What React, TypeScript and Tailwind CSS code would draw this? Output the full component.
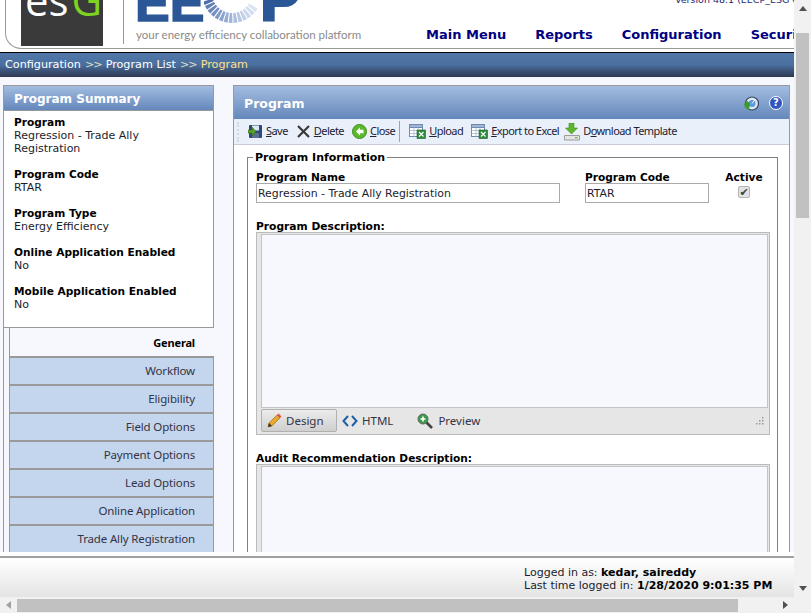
import type { ReactNode } from "react";

const summary = [
  { label: "Program", value: ["Regression - Trade Ally", "Registration"] },
  { label: "Program Code", value: ["RTAR"] },
  { label: "Program Type", value: ["Energy Efficiency"] },
  { label: "Online Application Enabled", value: ["No"] },
  { label: "Mobile Application Enabled", value: ["No"] },
];

const tabs = [
  "Workflow",
  "Eligibility",
  "Field Options",
  "Payment Options",
  "Lead Options",
  "Online Application",
  "Trade Ally Registration",
];

const shades = ["#4f6fab", "#5f7db5", "#6a86bb", "#7590c2", "#809ac8", "#8ba3cd", "#96acd3", "#a1b5d9", "#acbede", "#b7c7e3", "#c1cfe8", "#cbd7ec", "#d3ddef", "#dbe3f2"];

function Sunburst() {
  const cx = 28;
  const cy = -7;
  const pt = (r: number, deg: number) => {
    const a = (deg * Math.PI) / 180;
    return `${cx + r * Math.cos(a)},${cy + r * Math.sin(a)}`;
  };
  return (
    <svg width="54" height="25" viewBox="0 0 54 25" className="shrink-0">
      {shades.map((shade, i) => {
        const d = 160 - i * 9.6;
        return (
          <polygon
            key={shade}
            points={`${pt(20, d - 3.2)} ${pt(30, d - 3.8)} ${pt(30, d + 3.8)} ${pt(20, d + 3.2)}`}
            fill={shade}
          />
        );
      })}
    </svg>
  );
}

function SaveIcon() {
  return (
    <svg width="15" height="15" viewBox="0 0 15 15">
      <rect x="1" y="1" width="13" height="13" rx="1" fill="#2d4a7c" />
      <rect x="4" y="1.5" width="7" height="5" fill="#dfe7f2" />
      <rect x="4" y="9" width="7" height="5" fill="#5a6f92" />
      <path d="M0 6h4V3l4 4.500L4 12V9H0z" fill="#5aa02c" stroke="#2f6b16" strokeWidth=".6" />
    </svg>
  );
}

function DeleteIcon() {
  return (
    <svg width="15" height="15" viewBox="0 0 15 15">
      <path d="M2 2l11 11M13 2L2 13" stroke="#3a3a3a" strokeWidth="2.2" />
    </svg>
  );
}

function CloseIcon() {
  return (
    <svg width="15" height="15" viewBox="0 0 15 15">
      <circle cx="7.500" cy="7.500" r="7" fill="#5cb82e" stroke="#3f8f1e" />
      <path d="M8 3.500L4 7.500l4 4V9.200h3.500V5.800H8z" fill="#fff" />
    </svg>
  );
}

function ExcelIcon() {
  return (
    <svg width="17" height="15" viewBox="0 0 17 15">
      <rect x=".5" y=".5" width="13" height="12" fill="#fff" stroke="#6f88ad" />
      <rect x=".5" y=".5" width="13" height="3" fill="#9fb6d6" stroke="#6f88ad" />
      <path d="M.5 6.500h13M.5 9.500h13M5 3.500v9M9 3.500v9" stroke="#a9b9cf" strokeWidth=".8" />
      <rect x="8" y="6" width="8.500" height="8.500" fill="#2f8a3a" stroke="#1d6128" strokeWidth=".6" />
      <path d="M10 8l4.500 4.500M14.500 8L10 12.500" stroke="#fff" strokeWidth="1.200" />
    </svg>
  );
}

function DownloadIcon() {
  return (
    <svg width="16" height="18" viewBox="0 0 16 18">
      <path d="M5 0h5v5h3.500L7.500 11 1.500 5H5z" fill="#5fb52d" stroke="#3f8f1e" strokeWidth=".6" />
      <path d="M.5 12.500h15v4.500H.5z" fill="#e4e4e4" stroke="#9c9c9c" />
      <rect x="11" y="14" width="2.500" height="1.200" fill="#5fb52d" />
    </svg>
  );
}

function GlobeIcon() {
  return (
    <svg width="15" height="15" viewBox="0 0 15 15">
      <circle cx="8" cy="7.500" r="6.500" fill="#dfe9f5" stroke="#33475f" strokeWidth="1.200" />
      <circle cx="8" cy="7.500" r="3.500" fill="#5b9bd8" />
      <path d="M0 8l3-3 3 2-1 7C2 13 .5 11 0 8z" fill="#3d9a2c" />
      <path d="M8 7.500l3-4" stroke="#fff" strokeWidth="1" />
    </svg>
  );
}

function HelpIcon() {
  return (
    <div className="flex h-[14px] w-[14px] items-center justify-center rounded-full border-[1.5px] border-white bg-[#2f55c0] text-[10px] font-bold leading-none text-white">
      ?
    </div>
  );
}

function PencilIcon() {
  return (
    <svg width="15" height="15" viewBox="0 0 15 15">
      <path d="M1 14l1-4 8-8 3 3-8 8z" fill="#e9a82c" stroke="#8f6414" strokeWidth=".6" />
      <path d="M10 2l1.500-1.500 3 3L13 5z" fill="#d9534f" />
      <path d="M1 14l1-4 3 3z" fill="#3b3024" />
    </svg>
  );
}

function CodeIcon() {
  return (
    <svg width="16" height="12" viewBox="0 0 16 12">
      <path d="M6 1L1.500 6 6 11M10 1l4.500 5L10 11" fill="none" stroke="#1f5fa8" strokeWidth="2" />
    </svg>
  );
}

function ZoomIcon() {
  return (
    <svg width="16" height="16" viewBox="0 0 16 16">
      <path d="M9 9l6 6" stroke="#444" strokeWidth="2.600" />
      <circle cx="6" cy="6" r="5" fill="#3e9a4a" stroke="#5c6b5c" />
      <path d="M3.500 6h5M6 3.500v5" stroke="#fff" strokeWidth="1.600" />
    </svg>
  );
}

function ToolButton({ icon, first, rest, before = "" }: { icon: ReactNode; first: string; rest: string; before?: string }) {
  return (
    <div className="flex items-center gap-[3px]">
      {icon}
      <span className="-mt-[2px]">
        {before}
        <span className="underline">{first}</span>
        {rest}
      </span>
    </div>
  );
}

function Editor({ children, bodyHeight }: { children?: ReactNode; bodyHeight: string }) {
  return (
    <div className="w-[514px] border border-[#bbbbbb] bg-[#e6e6e6] pl-[4px] pr-[1px] pt-[1px]">
      <div className={`${bodyHeight} border border-[#c4c4c4] bg-[#f7f8fe]`} />
      {children}
    </div>
  );
}

export default function App() {
  return (
    <div className="flex h-[613px] w-[811px] flex-col overflow-hidden bg-white font-['DejaVu_Sans',sans-serif] text-[11px] leading-[13px] text-[#1c1c2c]">
      <div className="flex min-h-0 flex-1">
        <div className="flex w-[794px] flex-col">
          {/* header */}
          <div className="h-[52px] shrink-0 pl-[5px]">
            <div className="flex h-[49px] overflow-hidden rounded-bl-[16px] border-b border-l border-[#999999]">
              <div className="ml-[15px] h-[46px] w-[82px] shrink-0 overflow-hidden bg-[#3a3a3a] pl-[4px] font-['Open_Sans',sans-serif] text-[42px] leading-[2px]">
                <div className="-mt-[1px] whitespace-nowrap">
                  <span className="text-white">es</span>
                  <span className="ml-[3px] text-[#7ed321]">G</span>
                </div>
              </div>
              <div className="ml-[20px] h-[44px] w-px shrink-0 bg-[#999999]" />
              <div className="ml-[11px] w-[240px] shrink-0">
                <div className="flex h-[27px] items-start overflow-hidden font-['Liberation_Sans',sans-serif] font-bold leading-none text-[#2b5797] [-webkit-text-stroke:1.5px_#2b5797]">
                  <span className="-mt-[23px] text-[52px]">EE</span>
                  <Sunburst />
                  <span className="-mt-[30px] ml-[2px] text-[60px] [-webkit-text-stroke:3px_#2b5797]">P</span>
                </div>
                <p className="ml-[1px] mt-[1px] whitespace-nowrap font-['Lato',sans-serif] text-[11.5px] leading-[14px] text-[#8a8a8a]">your energy efficiency collaboration platform</p>
              </div>
              <div className="min-w-0 flex-1 overflow-hidden">
                <p className="-mt-[7px] whitespace-nowrap pl-[300px] text-[9.5px] leading-[13px] text-[#1e2a78]">Version 48.1 (EECP_ESG QA)</p>
                <nav className="mt-[21px] flex gap-[29px] whitespace-nowrap pl-[51px] text-[13px] font-bold leading-[16px] text-[#000080]">
                  <span>Main Menu</span>
                  <span>Reports</span>
                  <span>Configuration</span>
                  <span>Security</span>
                </nav>
              </div>
            </div>
          </div>

          {/* breadcrumb */}
          <div className="flex h-[25px] shrink-0 items-center gap-[4px] border-t border-black bg-gradient-to-b from-[#5178aa] via-[#4a6f9f] to-[#2c3750] pb-[2px] pl-[5px] text-[11.2px] text-white">
            <span>Configuration</span>
            <span className="tracking-[-1px] text-[#d9dfc8]">&gt;&gt;</span>
            <span>Program List</span>
            <span className="tracking-[-1px] text-[#d9dfc8]">&gt;&gt;</span>
            <span className="text-[#ffe08a]">Program</span>
          </div>

          {/* content */}
          <div className="flex h-[475px] shrink-0 gap-[19px] overflow-hidden bg-[#f7f8fe] pl-[3px] pt-[8px]">
            <aside className="w-[211px] shrink-0 border-l border-[#999999]">
              <div className="flex h-[25px] items-center border-r border-t border-[#999999] bg-gradient-to-b from-[#a3bde0] to-[#6587bb] pl-[10px] pt-[3px] text-[12px] font-bold text-white">
                Program Summary
              </div>
              <div className="flex h-[218px] flex-col gap-[13px] border-b border-r border-t border-[#999999] bg-white pl-[10px] pt-[5px]">
                {summary.map((s) => (
                  <div key={s.label}>
                    <p className="text-[10.6px] font-bold text-black">{s.label}</p>
                    {s.value.map((v) => (
                      <p key={v}>{v}</p>
                    ))}
                  </div>
                ))}
              </div>
              <div className="ml-[5px] font-['Noto_Sans',sans-serif] text-[11.5px] tracking-[-0.15px]">
                <div className="flex h-[28px] items-center justify-end border-l border-[#999999] bg-[#f7f8fe] pr-[19px] text-[11px] font-bold text-black">
                  General
                </div>
                {tabs.map((t) => (
                  <div key={t} className="flex h-[28px] items-center justify-end border-x border-t-2 border-[#999999] bg-[#c4d6ee] pb-[2px] pr-[18px] text-[#333344]">
                    {t}
                  </div>
                ))}
              </div>
            </aside>

            <main className="w-[557px] shrink-0 border-x border-t border-[#999999] bg-white">
              <div className="flex h-[33px] items-center justify-between bg-gradient-to-b from-[#a3bde0] to-[#6587bb] pl-[10px] pr-[6px] pt-[1px] text-[12.5px] font-bold text-white">
                Program
                <div className="flex items-center gap-[10px]">
                  <GlobeIcon />
                  <HelpIcon />
                </div>
              </div>
              <div className="flex h-[26px] items-center border-b border-[#c8ccd4] bg-[#eaf0fa] pl-[3px] font-['Noto_Sans',sans-serif] tracking-[-0.55px] text-[#222233]">
                <div className="mr-[9px] h-[20px] border-l-2 border-dotted border-[#cfd6e2]" />
                <div className="flex items-center gap-[8px]">
                  <ToolButton icon={<SaveIcon />} first="S" rest="ave" />
                  <ToolButton icon={<DeleteIcon />} first="D" rest="elete" />
                  <ToolButton icon={<CloseIcon />} first="C" rest="lose" />
                </div>
                <div className="ml-[4px] mr-[9px] h-[21px] w-px bg-[#9aa3b0]" />
                <div className="flex items-center gap-[8px]">
                  <ToolButton icon={<ExcelIcon />} first="U" rest="pload" />
                  <ToolButton icon={<ExcelIcon />} first="E" rest="xport to Excel" />
                </div>
                <div className="ml-[5px]">
                  <ToolButton icon={<DownloadIcon />} before="D" first="o" rest="wnload Template" />
                </div>
              </div>

              <fieldset className="ml-[13px] mt-[6px] h-[500px] w-[531px] border border-[#808080] pl-[8px]">
                <legend className="-ml-[3px] px-[2px] font-bold text-black">Program Information</legend>
                <div className="mt-[7px] flex">
                  <label className="block w-[304px]">
                    <span className="block text-[10.6px] font-bold text-black">Program Name</span>
                    <input readOnly value="Regression - Trade Ally Registration" className="mt-[-1px] h-[20px] w-full border border-[#aaaaaa] bg-white px-[1px] text-[10.9px] text-[#1c1c2c] outline-none" />
                  </label>
                  <label className="ml-[25px] block w-[124px]">
                    <span className="block text-[10.6px] font-bold text-black">Program Code</span>
                    <input readOnly value="RTAR" className="mt-[-1px] h-[20px] w-full border border-[#aaaaaa] bg-white px-[1px] text-[10.9px] text-[#1c1c2c] outline-none" />
                  </label>
                  <div className="ml-[16px] flex w-[38px] flex-col items-center">
                    <span className="text-[10.6px] font-bold text-black">Active</span>
                    <div className="mt-[2px] flex h-[12px] w-[12px] items-center justify-center rounded-[2px] border border-[#b5b5b5] bg-[#e2e2e2] text-[11px] leading-none text-[#444444]">
                      ✔
                    </div>
                  </div>
                </div>

                <p className="mt-[17px] text-[10.7px] font-bold text-black">Program Description:</p>
                <div className="mt-[-1px]">
                  <Editor bodyHeight="h-[174px]">
                    <div className="flex h-[26px] items-center pb-[1px] font-['Noto_Sans',sans-serif] text-[11.5px] text-[#333344]">
                      <div className="flex h-[23px] w-[76px] items-center gap-[4px] rounded-[2px] border border-[#b0b0b0] bg-gradient-to-b from-[#ececec] to-[#cfcfcf] pl-[5px]">
                        <PencilIcon />
                        Design
                      </div>
                      <div className="ml-[5px] flex items-center gap-[4px]">
                        <CodeIcon />
                        HTML
                      </div>
                      <div className="ml-[24px] flex items-center gap-[5px]">
                        <ZoomIcon />
                        Preview
                      </div>
                      <svg width="12" height="12" viewBox="0 0 12 12" className="ml-auto mr-[3px]">
                        <path d="M9 2h1.500v1.500H9zM6 5h1.500v1.500H6zM9 5h1.500v1.500H9zM3 8h1.500v1.500H3zM6 8h1.500v1.500H6zM9 8h1.500v1.500H9z" fill="#9a9a9a" />
                      </svg>
                    </div>
                  </Editor>
                </div>

                <p className="mt-[17px] text-[10.6px] font-bold text-black">Audit Recommendation Description:</p>
                <div className="mt-[-1px]">
                  <Editor bodyHeight="h-[174px]" />
                </div>
              </fieldset>
            </main>
          </div>

          {/* footer */}
          <div className="mt-[4px] flex h-[41px] shrink-0 justify-end border-t-2 border-[#a0a0a0] bg-gradient-to-b from-white to-[#e4e4e4] pr-[20px] pt-[8px]">
            <div className="w-[250px]">
              <p>
                Logged in as: <b className="text-black">kedar, saireddy</b>
              </p>
              <p>
                Last time logged in: <b className="text-black">1/28/2020 9:01:35 PM</b>
              </p>
            </div>
          </div>
        </div>

        {/* vertical scrollbar */}
        <div className="flex w-[17px] shrink-0 flex-col items-center bg-[#f1f1f1]">
          <div className="mt-[6px] h-0 w-0 border-x-[4px] border-b-[5px] border-x-transparent border-b-[#505050]" />
          <div className="mt-[22px] h-[185px] w-[13px] bg-[#c1c1c1]" />
          <div className="mb-[6px] mt-auto h-0 w-0 border-x-[4px] border-t-[5px] border-x-transparent border-t-[#505050]" />
        </div>
      </div>

      {/* horizontal scrollbar */}
      <div className="flex h-[16px] shrink-0 items-center bg-[#f1f1f1]">
        <div className="ml-[6px] h-0 w-0 border-y-[4px] border-r-[5px] border-y-transparent border-r-[#a0a0a0]" />
        <div className="ml-[6px] h-[13px] w-[721px] bg-[#c1c1c1]" />
        <div className="ml-[45px] h-0 w-0 border-y-[4px] border-l-[5px] border-y-transparent border-l-[#505050]" />
      </div>
    </div>
  );
}
